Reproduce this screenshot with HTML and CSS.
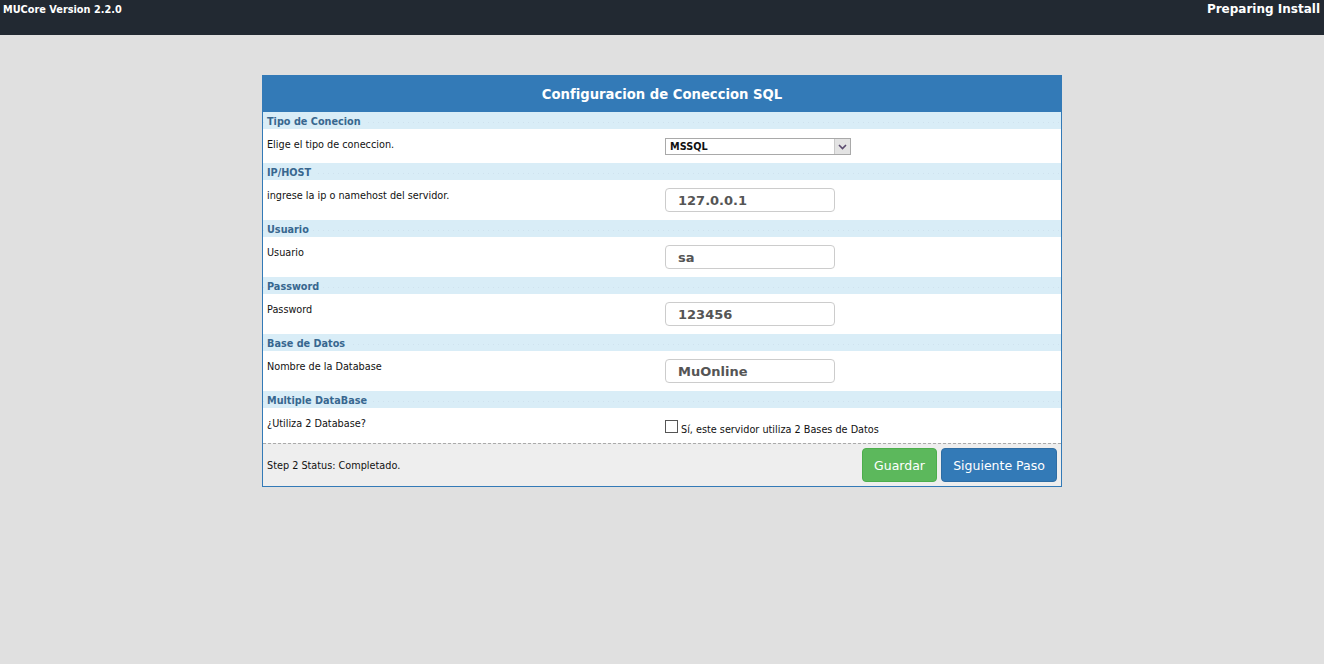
FILE: index.html
```html
<!DOCTYPE html>
<html lang="es">
<head>
<meta charset="utf-8">
<title>MUCore Install</title>
<link rel="stylesheet" href="styles.css">
</head>
<body>
<header class="topbar">
  <span class="brand">MUCore Version 2.2.0</span>
  <span class="status">Preparing Install</span>
</header>
<main class="page">
  <section class="panel">
    <h1 class="panel-title">Configuracion de Coneccion SQL</h1>

    <div class="section-head"><span>Tipo de Conecion</span></div>
    <div class="row">
      <div class="label">Elige el tipo de coneccion.</div>
      <div class="field">
        <div class="select"><span class="select-value">MSSQL</span><span class="select-btn"><svg width="9" height="6" viewBox="0 0 9 6"><path d="M1 1 L4.5 4.5 L8 1" fill="none" stroke="#5a4a6e" stroke-width="1.6"/></svg></span></div>
      </div>
    </div>

    <div class="section-head"><span>IP/HOST</span></div>
    <div class="row">
      <div class="label">ingrese la ip o namehost del servidor.</div>
      <div class="field"><div class="input">127.0.0.1</div></div>
    </div>

    <div class="section-head"><span>Usuario</span></div>
    <div class="row">
      <div class="label">Usuario</div>
      <div class="field"><div class="input">sa</div></div>
    </div>

    <div class="section-head"><span>Password</span></div>
    <div class="row">
      <div class="label">Password</div>
      <div class="field"><div class="input">123456</div></div>
    </div>

    <div class="section-head"><span>Base de Datos</span></div>
    <div class="row">
      <div class="label">Nombre de la Database</div>
      <div class="field"><div class="input">MuOnline</div></div>
    </div>

    <div class="section-head"><span>Multiple DataBase</span></div>
    <div class="row">
      <div class="label">¿Utiliza 2 Database?</div>
      <div class="field check-field"><span class="checkbox"></span><span class="check-text">Sí, este servidor utiliza 2 Bases de Datos</span></div>
    </div>

    <footer class="panel-footer">
      <span class="step">Step 2 Status: Completado.</span>
      <div class="buttons">
        <button class="btn btn-green">Guardar</button>
        <button class="btn btn-blue">Siguiente Paso</button>
      </div>
    </footer>
  </section>
</main>
</body>
</html>
```

FILE: styles.css
```css
* { box-sizing: border-box; }
html, body { margin: 0; padding: 0; }
body {
  background: #e0e0e0;
  font-family: "DejaVu Sans", Verdana, sans-serif;
  font-size: 9.7px;
  color: #111;
  height: 664px;
}
.topbar {
  height: 35px;
  background: #222932;
  color: #fff;
  display: flex;
  justify-content: space-between;
  align-items: flex-start;
  padding: 0 4px 0 3px;
  font-weight: bold;
}
.brand { font-size: 9.75px; line-height: 19px; }
.status { font-size: 12px; line-height: 19px; }
.page {
  display: flex;
  justify-content: center;
  padding-top: 40px;
}
.panel {
  width: 800px;
  border: 1px solid #337ab7;
  background: #fff;
}
.panel-title {
  margin: 0;
  height: 36px;
  line-height: 37px;
  background: #337ab7;
  color: #fff;
  font-size: 13.2px;
  font-weight: bold;
  text-align: center;
}
.section-head {
  height: 17px;
  line-height: 19px;
  padding: 0 4px;
  background-color: #d9edf7;
  background-image: linear-gradient(to right, #cfe2ee 1px, transparent 1px);
  background-size: 5px 1px;
  background-position: 0 10px;
  background-repeat: repeat-x;
  color: #38678f;
  font-weight: bold;
}
.section-head span {
  background: #d9edf7;
  padding-right: 4px;
}
.row {
  display: grid;
  grid-template-columns: 50% 50%;
}
.label {
  padding: 8px 4px;
  line-height: 16px;
}
.field {
  padding: 8px 4px 8px 3px;
}
.select {
  margin-top: 1px;
  width: 186px;
  height: 17px;
  border: 1px solid #a9a9a9;
  display: flex;
  align-items: stretch;
  font-weight: bold;
}
.select-value { flex: 1; padding-left: 4px; line-height: 15px; }
.select-btn {
  width: 16px;
  background: #e3e3e3;
  border-left: 1px solid #c9c9c9;
  display: flex;
  align-items: center;
  justify-content: center;
}
.input {
  width: 170px;
  height: 24px;
  border: 1px solid #ccc;
  border-radius: 4px;
  padding-left: 12px;
  line-height: 23px;
  font-size: 13px;
  font-weight: bold;
  color: #555;
}
.check-field {
  display: flex;
  align-items: flex-end;
  padding: 12px 4px 10px 3px;
}
.checkbox {
  width: 13px;
  height: 13px;
  border: 1px solid #555;
  background: #fff;
  margin-right: 3px;
  flex: none;
}
.check-text { line-height: 12px; margin-bottom: -3px; }
.panel-footer {
  border-top: 1px dashed #aaa;
  background: #eee;
  padding: 4px;
  display: flex;
  justify-content: space-between;
  align-items: center;
}
.buttons { display: flex; gap: 4px; }
.btn {
  height: 34px;
  border: 1px solid transparent;
  border-radius: 4px;
  color: #fff;
  font-family: "DejaVu Sans", Verdana, sans-serif;
  font-size: 12.5px;
  padding: 0;
  white-space: nowrap;
}
.btn-green { background: #5cb85c; border-color: #4cae4c; width: 75px; }
.btn-blue { background: #337ab7; border-color: #2e6da4; width: 116px; }
```
